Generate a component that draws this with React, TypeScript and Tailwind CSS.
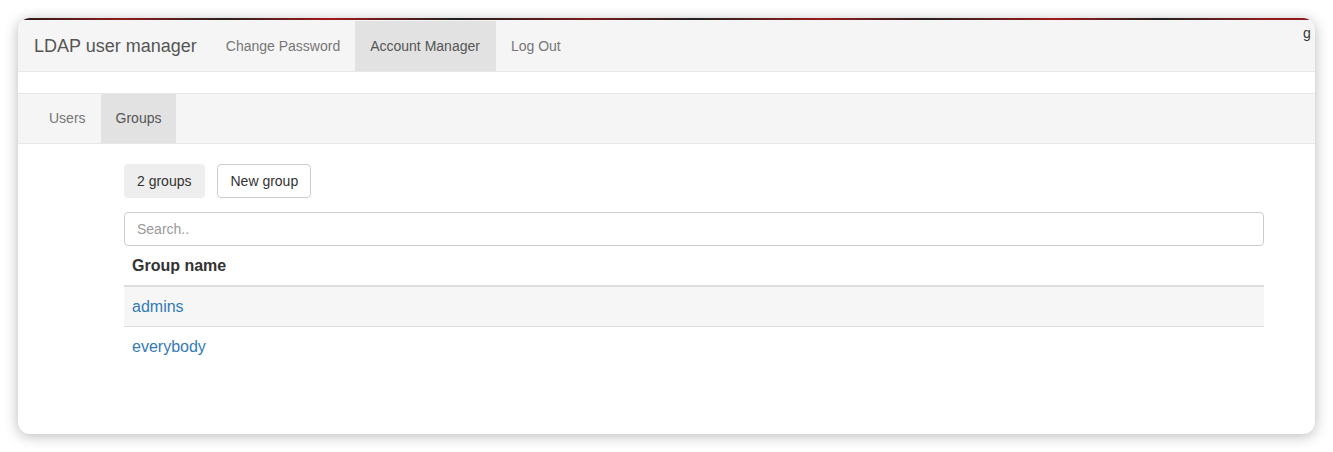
import React from "react";

const groups = ["admins", "everybody"];

const topNav = [
  { label: "Change Password", active: false },
  { label: "Account Manager", active: true },
  { label: "Log Out", active: false },
];

const subNav = [
  { label: "Users", active: false },
  { label: "Groups", active: true },
];

export default function App() {
  return (
    <div
      className="w-[1333px] h-[452px] bg-white p-[18px] flex"
      style={{ fontFamily: '"Liberation Sans", Arial, sans-serif' }}
    >
      <div className="relative flex-1 flex flex-col overflow-hidden rounded-[12px] bg-white shadow-[0_2px_14px_rgba(0,0,0,0.28)]">
        {/* window top strip */}
        <div className="h-[2px] bg-[linear-gradient(90deg,#2a1a1a_0%,#8e1a1c_8%,#2a2020_16%,#a3181b_24%,#1f1f1f_34%,#7a1a1b_44%,#222_52%,#9b1a1c_62%,#262020_70%,#a3181b_80%,#222_88%,#8e1a1c_96%)]" />

        {/* main navbar */}
        <nav className="relative flex h-[52px] items-stretch border-b border-[#e7e7e7] bg-[#f5f5f5] pt-px">
          <a className="flex items-center pl-[16px] pr-[14px] text-[18px] text-[#555]">LDAP user manager</a>
          {topNav.map((item) => (
            <a
              key={item.label}
              className={
                item.active
                  ? "flex items-center bg-[#e2e2e2] pl-[15px] pr-[16px] text-[14px] text-[#555]"
                  : "flex items-center px-[15px] text-[14px] text-[#777]"
              }
            >
              {item.label}
            </a>
          ))}
          <span className="absolute left-[1285px] top-[3px] text-[14px] text-[#333]">g</span>
        </nav>

        {/* sub navbar */}
        <nav className="mt-[21px] flex h-[51px] items-stretch border-y border-[#e7e7e7] bg-[#f5f5f5] pl-[16px]">
          {subNav.map((item) => (
            <a
              key={item.label}
              className={
                item.active
                  ? "flex items-center bg-[#e2e2e2] px-[15px] text-[14px] text-[#555]"
                  : "flex items-center px-[15px] text-[14px] text-[#777]"
              }
            >
              {item.label}
            </a>
          ))}
        </nav>

        {/* content */}
        <div className="ml-[106px] mr-[51px] mt-[20px] flex flex-col">
          <div className="flex gap-[12px]">
            <span className="flex h-[34px] items-center rounded-[4px] bg-[#eeeeee] pl-[13px] pr-[14px] text-[14px] text-[#333]">
              2 groups
            </span>
            <button className="flex h-[34px] items-center rounded-[4px] border border-[#ccc] bg-white px-[12px] text-[14px] text-[#333]">
              New group
            </button>
          </div>

          <input
            type="text"
            placeholder="Search.."
            className="mt-[14px] h-[34px] w-full rounded-[4px] border border-[#ccc] px-[12px] text-[14px] text-[#555] outline-none placeholder:text-[#999]"
          />

          <table className="w-full text-[16px]">
            <thead>
              <tr className="border-b-2 border-[#ddd]">
                <th className="h-[40px] px-[8px] text-left font-bold text-[#333]">Group name</th>
              </tr>
            </thead>
            <tbody>
              {groups.map((g, i) => (
                <tr key={g} className={i === 0 ? "border-b border-[#ddd] bg-[#f6f6f6]" : ""}>
                  <td className="h-[40px] px-[8px] pt-px">
                    <a className="text-[#337ab7]">{g}</a>
                  </td>
                </tr>
              ))}
            </tbody>
          </table>
        </div>
      </div>
    </div>
  );
}
